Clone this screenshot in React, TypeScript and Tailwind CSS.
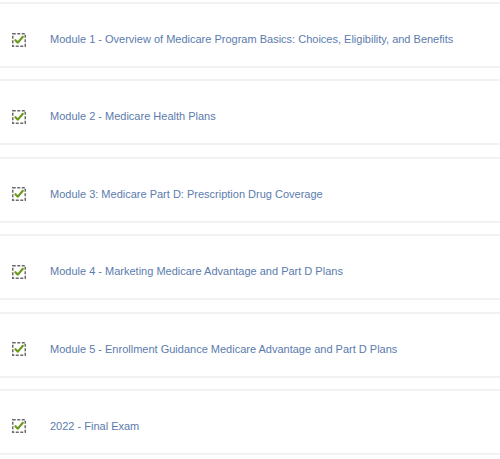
import React from 'react';

const modules = [
  'Module 1 - Overview of Medicare Program Basics: Choices, Eligibility, and Benefits',
  'Module 2 - Medicare Health Plans',
  'Module 3: Medicare Part D: Prescription Drug Coverage',
  'Module 4 - Marketing Medicare Advantage and Part D Plans',
  'Module 5 - Enrollment Guidance Medicare Advantage and Part D Plans',
  '2022 - Final Exam',
];

const CheckIcon: React.FC = () => (
  <svg width="14" height="14" viewBox="0 0 14 14" className="shrink-0">
    <rect x="0.75" y="0.75" width="12.5" height="12.5" fill="none" stroke="#6b6b6b" strokeWidth="1.5" strokeDasharray="3 1.5" />
    <path d="M3.4 7.2 L5.9 9.6 L10.8 3.8" fill="none" stroke="#6a9c1c" strokeWidth="2.2" strokeLinecap="round" strokeLinejoin="round" />
  </svg>
);

const App: React.FC = () => {
  return (
    <div className="min-h-screen bg-white pt-[2px] font-['Liberation_Sans',Arial,sans-serif]">
      <div className="flex flex-col gap-[11.4px]">
        {modules.map((m) => (
          <div
            key={m}
            className="h-[66px] border-y-2 border-[#f2f2f2] bg-white flex items-center pt-[9px]"
          >
            <div className="pl-[12px] w-[50px] flex items-center">
              <CheckIcon />
            </div>
            <a href="#" className="text-[11px] text-[#5b7bad] leading-none">
              {m}
            </a>
          </div>
        ))}
      </div>
    </div>
  );
};

export default App;
